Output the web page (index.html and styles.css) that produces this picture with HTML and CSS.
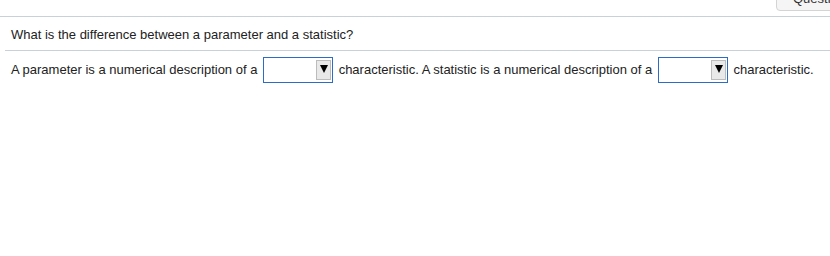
FILE: index.html
```html
<!DOCTYPE html>
<html lang="en">
<head>
    <meta charset="UTF-8">
    <title>Question</title>
    <link rel="stylesheet" href="styles.css">
</head>
<body>
    <div class="top-bar">
        <button class="question-btn">Question</button>
    </div>

    <div class="question-head">What is the difference between a parameter and a statistic?</div>

    <div class="answer-row">
        A parameter is a numerical description of a
        <span class="drop"><span class="drop-arrow"></span></span>
        characteristic. A statistic is a numerical description of a
        <span class="drop"><span class="drop-arrow"></span></span>
        characteristic.
    </div>
</body>
</html>
```

FILE: styles.css
```css
body {
    margin: 0;
    font-family: "Liberation Sans", Arial, sans-serif;
    font-size: 13px;
    color: #222;
    background: #fff;
}
.top-bar {
    height: 16px;
    border-bottom: 1px solid #c8d0da;
    overflow: hidden;
    display: flex;
    justify-content: flex-end;
}
.question-btn {
    margin-top: -14px;
    height: 25px;
    width: 70px;
    margin-right: -16px;
    padding: 0 0 0 16px;
    text-align: left;
    font-family: inherit;
    font-size: 13px;
    color: #333;
    background: #f5f5f5;
    border: 1px solid #d4d4d4;
    border-radius: 4px;
}
.question-head {
    margin-left: 5px;
    padding: 10px 6px 8px;
    line-height: 15px;
    border-bottom: 1px solid #c8d0da;
}
.answer-row {
    padding: 6px 11px;
    line-height: 26px;
}
.drop {
    display: inline-block;
    vertical-align: top;
    box-sizing: border-box;
    width: 70px;
    height: 26px;
    border: 1px solid #2e6bc6;
    background: #fff;
    position: relative;
    margin: 0 2px;
}
.drop-arrow {
    position: absolute;
    right: 1px;
    top: 2px;
    width: 15px;
    height: 20px;
    box-sizing: border-box;
    background: #e9e9e9;
    border: 1px solid #bcbcbc;
}
.drop-arrow::after {
    content: "";
    position: absolute;
    left: 3px;
    top: 4px;
    border-left: 4px solid transparent;
    border-right: 4px solid transparent;
    border-top: 8px solid #000;
}
```
